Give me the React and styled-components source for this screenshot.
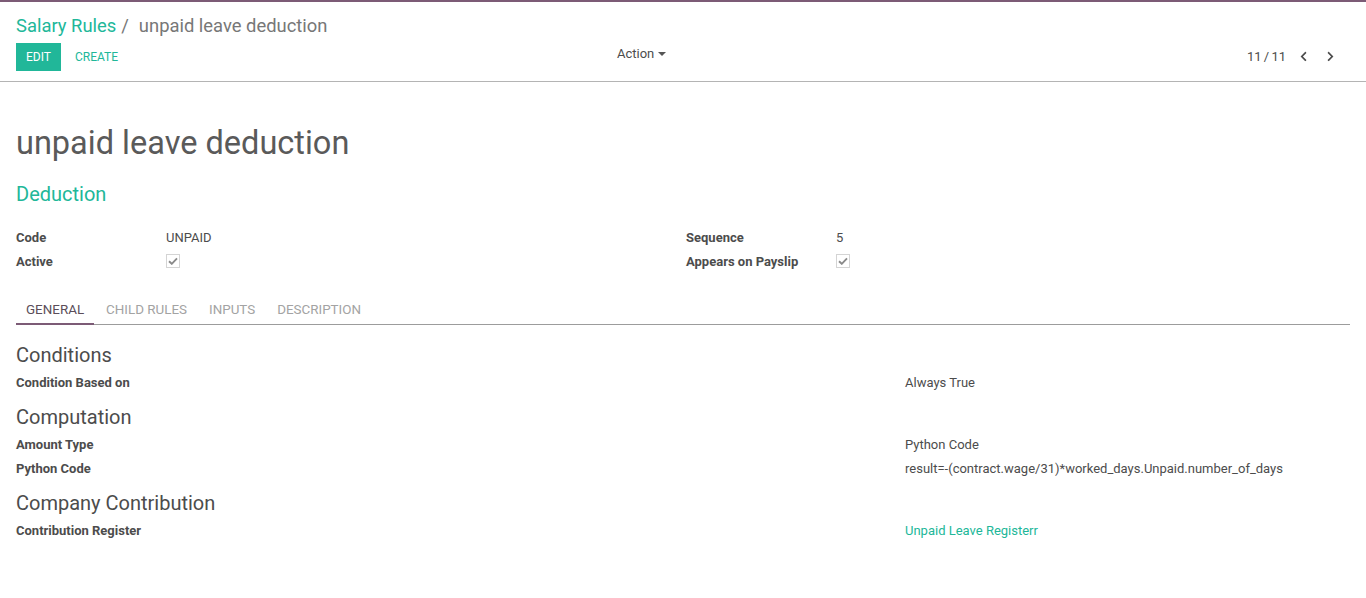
import React from "react";
import styled, { createGlobalStyle } from "styled-components";
import { FaChevronLeft, FaChevronRight } from "react-icons/fa";

const GlobalStyle = createGlobalStyle`
    body {
        margin: 0;
        background: #fff;
        font-family: Roboto, "Noto Sans", "Liberation Sans", sans-serif;
        font-size: 13px;
        color: #4c4c4c;
    }
`;

const TEAL = "#21b799";

///////////////////
// control panel
const TopBar = styled.div`
    height: 2px;
    background: #7c5b76;
`;

const ControlPanel = styled.div`
    padding: 9px 16px 10px;
    border-bottom: 1px solid #b4b4b4;
`;

const Breadcrumb = styled.div`
    font-size: 18.4px;
    line-height: 30px;
    margin-bottom: 2px;
    color: #777;
`;

const CrumbLink = styled.span`
    color: ${TEAL};
`;

const CrumbSep = styled.span`
    padding: 0 10px 0 5px;
    color: #777;
`;

const ButtonRow = styled.div`
    display: flex;
    align-items: flex-start;
    height: 28px;
`;

const LeftButtons = styled.div`
    width: 601px;
    display: flex;
    gap: 4px;
`;

const Button = styled.button`
    height: 28px;
    padding: 0 10px;
    border: none;
    border-radius: 0;
    font-family: inherit;
    font-size: 12px;
    text-transform: uppercase;
    cursor: pointer;
    background: ${(p) => (p.$primary ? TEAL : "transparent")};
    color: ${(p) => (p.$primary ? "#fff" : TEAL)};
`;

const ActionMenu = styled.div`
    display: flex;
    align-items: center;
    line-height: 22px;
    font-size: 13px;
    color: #4c4c4c;
    cursor: pointer;
`;

const Caret = styled.span`
    margin-left: 4px;
    width: 0;
    height: 0;
    border-left: 4px solid transparent;
    border-right: 4px solid transparent;
    border-top: 4px solid #555;
`;

const Pager = styled.div`
    margin-left: auto;
    margin-right: 6px;
    display: flex;
    align-items: center;
    height: 26px;
`;

const PagerValue = styled.span`
    font-size: 13px;
    color: #4c4c4c;
    margin-right: 4px;
    word-spacing: -1px;
`;

const PagerButton = styled.span`
    width: 27px;
    display: flex;
    justify-content: center;
    color: #4c4c4c;
    cursor: pointer;
`;

///////////////////
// form sheet
const Sheet = styled.div`
    padding: 0 16px;
`;

const Title = styled.h1`
    margin: 42px 0 0;
    font-size: 32.5px;
    line-height: 39px;
    font-weight: 400;
    color: #5a5a5a;
`;

const Subtitle = styled.h2`
    margin: 19px 0 0;
    font-size: 20px;
    line-height: 24px;
    font-weight: 400;
    color: ${TEAL};
`;

const TopGroup = styled.div`
    margin-top: 19px;
    display: grid;
    grid-template-columns: 670px 1fr;
`;

const FieldRow = styled.div`
    display: grid;
    grid-template-columns: ${(p) => p.$labelWidth || "150px"} 1fr;
    align-items: center;
    height: 24px;
`;

const Label = styled.span`
    font-weight: 700;
    color: #4c4c4c;
`;

const Value = styled.span`
    color: ${(p) => (p.$link ? TEAL : "#4c4c4c")};
`;

const CheckBox = styled.span`
    width: 14px;
    height: 14px;
    box-sizing: border-box;
    border: 1px solid #d4d4d4;
    display: flex;
    align-items: center;
    justify-content: center;
`;

const Check = () => (
    <CheckBox>
        <svg width="10" height="8" viewBox="0 0 10 8">
            <path d="M1 4.2 L3.8 6.8 L9 1.4" fill="none" stroke="#8a8a8a" strokeWidth="1.9" />
        </svg>
    </CheckBox>
);

///////////////////
// tabs
const Tabs = styled.div`
    margin-top: 16px;
    display: flex;
    border-bottom: 1px solid #9c9c9c;
`;

const Tab = styled.span`
    padding: 12px 10px 4px;
    margin-right: 2px;
    line-height: 18px;
    font-size: 13.4px;
    text-transform: uppercase;
    color: ${(p) => (p.$active ? "#5b4d59" : "#a3a3a3")};
    border-bottom: 2px solid ${(p) => (p.$active ? "#7c5b76" : "transparent")};
    margin-bottom: -1px;
    cursor: pointer;
`;

const TabContent = styled.div`
    padding-top: 7px;
`;

const Separator = styled.h3`
    margin: 11px 0 3px;
    font-size: 20px;
    line-height: 24px;
    font-weight: 400;
    color: #4c4c4c;
`;

const sections = [
    {
        title: "Conditions",
        rows: [{ label: "Condition Based on", value: "Always True" }],
    },
    {
        title: "Computation",
        rows: [
            { label: "Amount Type", value: "Python Code" },
            { label: "Python Code", value: "result=-(contract.wage/31)*worked_days.Unpaid.number_of_days" },
        ],
    },
    {
        title: "Company Contribution",
        rows: [{ label: "Contribution Register", value: "Unpaid Leave Registerr", link: true }],
    },
];

const tabs = ["General", "Child Rules", "Inputs", "Description"];

const App = () => {
    return (
        <>
            <GlobalStyle />
            <TopBar />
            <ControlPanel>
                <Breadcrumb>
                    <CrumbLink>Salary Rules</CrumbLink>
                    <CrumbSep>/</CrumbSep>
                    <span>unpaid leave deduction</span>
                </Breadcrumb>
                <ButtonRow>
                    <LeftButtons>
                        <Button $primary>Edit</Button>
                        <Button>Create</Button>
                    </LeftButtons>
                    <ActionMenu>
                        Action <Caret />
                    </ActionMenu>
                    <Pager>
                        <PagerValue>11 / 11</PagerValue>
                        <PagerButton><FaChevronLeft size={11} /></PagerButton>
                        <PagerButton><FaChevronRight size={11} /></PagerButton>
                    </Pager>
                </ButtonRow>
            </ControlPanel>

            <Sheet>
                <Title>unpaid leave deduction</Title>
                <Subtitle>Deduction</Subtitle>

                <TopGroup>
                    <div>
                        <FieldRow>
                            <Label>Code</Label>
                            <Value>UNPAID</Value>
                        </FieldRow>
                        <FieldRow>
                            <Label>Active</Label>
                            <Check />
                        </FieldRow>
                    </div>
                    <div>
                        <FieldRow>
                            <Label>Sequence</Label>
                            <Value>5</Value>
                        </FieldRow>
                        <FieldRow>
                            <Label>Appears on Payslip</Label>
                            <Check />
                        </FieldRow>
                    </div>
                </TopGroup>

                <Tabs>
                    {tabs.map((t, i) => (
                        <Tab key={t} $active={i === 0}>{t}</Tab>
                    ))}
                </Tabs>

                <TabContent>
                    {sections.map((s) => (
                        <div key={s.title}>
                            <Separator>{s.title}</Separator>
                            {s.rows.map((r) => (
                                <FieldRow key={r.label} $labelWidth="889px">
                                    <Label>{r.label}</Label>
                                    <Value $link={r.link}>{r.value}</Value>
                                </FieldRow>
                            ))}
                        </div>
                    ))}
                </TabContent>
            </Sheet>
        </>
    );
};

export default App;
